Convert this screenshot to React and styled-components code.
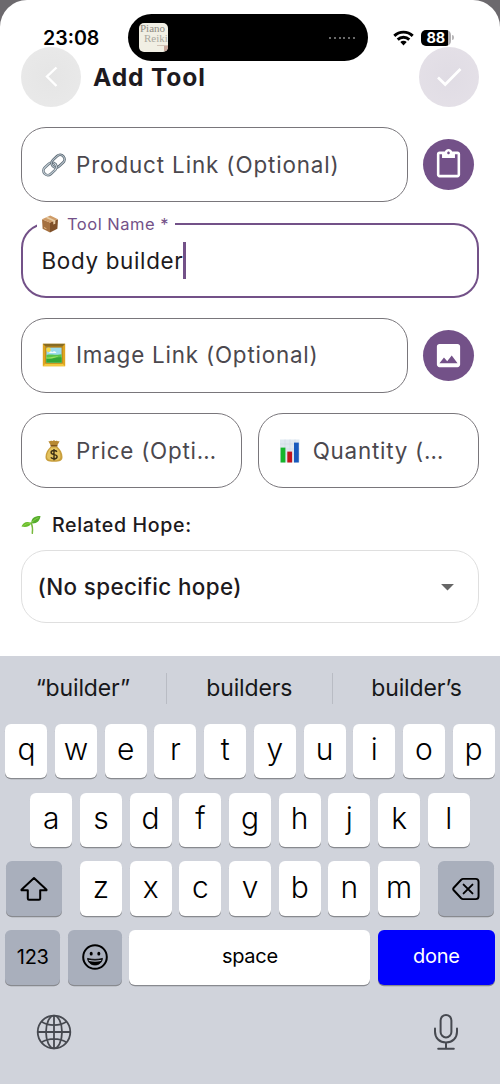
import React, {useState} from "react";
import styled, {createGlobalStyle} from "styled-components";
import {MdArrowDropDown, MdContentPaste, MdImage} from "react-icons/md";

const GlobalStyle = createGlobalStyle`
    * {
        box-sizing: border-box;
    }
    body {
        margin: 0;
        background-color: #6c696d;
        font-family: Inter, "Liberation Sans", sans-serif;
    }
    svg {
        display: block;
        flex: none;
    }
    button {
        font: inherit;
        border: 0;
        padding: 0;
    }
`;

const Screen = styled.div`
    display: flex;
    flex-direction: column;
    width: 500px;
    height: 1084px;
    overflow: hidden;
    background-color: #fff;
    border-radius: 27px 27px 0 0;
`;

const StatusBar = styled.div`
    display: grid;
    grid-template-columns: 127.5px 240.5px 1fr;
    height: 47px;
    padding-top: 14px;
`;

const Clock = styled.div`
    height: 47px;
    padding-left: 43px;
    line-height: 48px;
    font-size: 19.6px;
    font-weight: 600;
    color: #000;
    white-space: nowrap;
`;

const Island = styled.div`
    display: flex;
    align-items: center;
    justify-content: space-between;
    height: 47px;
    padding: 0 13px 0 11.5px;
    background-color: #000;
    border-radius: 24px;
`;

const Artwork = styled.div`
    display: flex;
    flex-direction: column;
    width: 29px;
    height: 29px;
    padding-left: 1px;
    overflow: hidden;
    border-radius: 5px;
    background-color: #f1efe4;
    color: #8d8b82;
    font-family: "Liberation Serif", serif;
    font-size: 11px;
    line-height: 10px;
    white-space: nowrap;
`;

const ArtworkSecond = styled.div`
    padding-left: 4px;
    color: #aaa89e;
`;

const ArtworkPiano = styled.div`
    align-self: flex-end;
    width: 11px;
    height: 6px;
    margin-top: 2px;
    border-top: 1px solid #d2c3b6;
    background: linear-gradient(90deg, transparent 7px, #c9a79b 7px);
`;

const Dots = styled.div`
    display: flex;
    gap: 2.8px;
`;

const Dot = styled.span`
    width: 2px;
    height: 2px;
    border-radius: 1px;
    background-color: #8c8c8c;
`;

const StatusIcons = styled.div`
    position: relative;
    z-index: 1;
    display: flex;
    align-items: center;
    height: 47px;
    padding-left: 25px;
    gap: 7px;
`;

const Battery = styled.div`
    display: flex;
    align-items: center;
    gap: 1px;
`;

const BatteryLevel = styled.div`
    width: 30px;
    height: 16px;
    border-radius: 5px;
    background: linear-gradient(90deg, #000 26.5px, #b0aeb0 26.5px);
    color: #fff;
    font-size: 14.5px;
    line-height: 16.5px;
    font-weight: 700;
    padding-left: 5.5px;
    letter-spacing: -0.2px;
`;

const BatteryCap = styled.span`
    width: 2px;
    height: 5px;
    border-radius: 0 2px 2px 0;
    background-color: #b8b6b8;
`;

const Header = styled.header`
    display: flex;
    align-items: center;
    height: 60px;
    padding: 0 21px;
`;

const RoundButton = styled.button`
    display: flex;
    align-items: center;
    justify-content: center;
    width: 60px;
    height: 60px;
    border-radius: 50%;
    background: ${props => props.$tint};
`;

const Title = styled.h1`
    flex: 1;
    margin: 0 0 1px 12px;
    font-size: 24.6px;
    line-height: 30px;
    font-weight: 650;
    letter-spacing: 0.85px;
    color: #1d1a20;
`;

const Form = styled.main`
    display: flex;
    flex-direction: column;
    padding: 20.4px 21px 0;
    height: 549.4px;
`;

const Line = styled.div`
    display: flex;
    align-items: center;
    gap: 15.5px;
    height: 75px;
    margin-bottom: 20.3px;
`;

const Field = styled.label`
    position: relative;
    flex: 1;
    min-width: 0;
    display: flex;
    align-items: center;
    height: 75px;
    padding: 0 ${props => props.$active ? 18.5 : 19.5}px;
    border: ${props => props.$active ? "2.5px solid #735188" : "1.3px solid #79767b"};
    border-radius: 25px;
`;

const Placeholder = styled.span`
    margin-left: 10.5px;
    font-size: 22.4px;
    line-height: 30px;
    letter-spacing: ${props => props.$spacing || 0.75}px;
    color: #4b484e;
    white-space: nowrap;
`;

// sits over the top border and hides it behind the text
const FloatingLabel = styled.span`
    position: absolute;
    left: 14px;
    top: -12px;
    display: flex;
    align-items: center;
    gap: 8px;
    width: 138px;
    height: 22px;
    padding-left: 4px;
    background-color: #fff;
    font-size: 16.5px;
    letter-spacing: 0.5px;
    color: #735188;
    white-space: nowrap;
`;

const Value = styled.span`
    margin-top: 2px;
    font-size: 22.4px;
    line-height: 30px;
    letter-spacing: 0.68px;
    color: #1d1a20;
`;

const Caret = styled.span`
    width: 2.5px;
    height: 37px;
    background-color: #735188;
`;

const ActionButton = styled.button`
    display: flex;
    align-items: center;
    justify-content: center;
    width: 51px;
    height: 51px;
    margin-right: 5px;
    border-radius: 50%;
    background-color: #735188;
    color: #fff;
`;

const SectionTitle = styled.h2`
    display: flex;
    align-items: center;
    gap: 11px;
    height: 26px;
    margin: 3px 0 12px;
    font-size: 19.6px;
    font-weight: 500;
    letter-spacing: 0.65px;
    color: #1d1a20;
`;

const Select = styled.div`
    display: flex;
    align-items: center;
    justify-content: space-between;
    height: 73.5px;
    padding: 0 15px 0 15.5px;
    border: 1.3px solid #dfdfdf;
    border-radius: 25px;
    font-size: 22.4px;
    font-weight: 500;
    letter-spacing: 0.38px;
    color: #1d1a20;
`;

const Keyboard = styled.section`
    flex: 1;
    background-color: #d0d3db;
`;

const Suggestions = styled.div`
    display: grid;
    grid-template-columns: 165.5px 166.5px 1fr;
    height: 67.6px;
    padding-top: 17px;
`;

const Suggestion = styled.div`
    height: 31px;
    line-height: 31px;
    text-align: center;
    font-size: 23px;
    letter-spacing: -0.15px;
    color: #17181a;
    border-left: ${props => props.$first ? "0" : "1px solid #b9bcc4"};
`;

const KeyRow = styled.div`
    display: flex;
    justify-content: center;
    gap: 7.7px;
    height: 54.5px;
    margin-bottom: 14.2px;
    padding: 0 5.3px;
`;

const Key = styled.button`
    display: flex;
    align-items: center;
    justify-content: center;
    flex: none;
    width: ${props => props.$width || 42}px;
    height: 54.5px;
    padding-bottom: ${props => props.$lift || 0}px;
    margin-left: ${props => props.$before || 0}px;
    margin-right: ${props => props.$behind || 0}px;
    border-radius: 6px;
    background-color: ${props => props.$tone || "#fff"};
    box-shadow: 0 1.2px 0 #888a8f;
    color: ${props => props.$ink || "#000"};
    font-size: ${props => props.$size || 30}px;
    font-weight: ${props => props.$size ? 400 : 320};
    letter-spacing: ${props => props.$size ? -0.3 : 0}px;
`;

const KeyboardFooter = styled.div`
    display: flex;
    align-items: center;
    justify-content: space-between;
    height: 42px;
    margin-top: 26px;
    padding: 0 41.5px 0 36px;
`;

const LinkEmoji = () => (
    <svg width="24" height="24" viewBox="0 0 24 24" fill="none">
        <g transform="rotate(-43 12 12)">
            <rect x="-0.8" y="7.6" width="14.4" height="8.8" rx="4.4" stroke="#65727d" strokeWidth="2.6" />
            <rect x="-0.8" y="7.6" width="14.4" height="8.8" rx="4.4" stroke="#c5d0d7" strokeWidth="1.1" />
            <rect x="10.4" y="7.6" width="14.4" height="8.8" rx="4.4" stroke="#596570" strokeWidth="2.6" />
            <rect x="10.4" y="7.6" width="14.4" height="8.8" rx="4.4" stroke="#b7c4cc" strokeWidth="1.1" />
            <path d="M9 16.4c2.7 0 4.6-2 4.6-4.4" stroke="#65727d" strokeWidth="2.6" />
            <path d="M9 16.4c2.7 0 4.6-2 4.6-4.4" stroke="#dce4e8" strokeWidth="1.1" />
        </g>
    </svg>
);

const BoxEmoji = () => (
    <svg width="18" height="18" viewBox="0 0 18 18">
        <path d="M1 4.2 9 7.6v10L1.6 13.8z" fill="#a5703f" />
        <path d="m9 7.6 8-3.4-.6 9.6L9 17.6z" fill="#7f5029" />
        <path d="m1 4.2 8.3-3.6L17 4.2 9 7.8z" fill="#cf9c68" />
        <path d="m4.6 2.7 7.7 3.6v3.3l2-.9V5.4L6.5 1.8z" fill="#e7cda6" />
        <path d="m3 12 2.4 1.2v1L3 13z" fill="#e2bd8c" />
    </svg>
);

const FrameEmoji = () => (
    <svg width="24" height="24" viewBox="0 0 24 24">
        <path d="M.8.8h22.4v22.4H.8z" fill="#dfa520" />
        <path d="M.8.8h22.4l-3 3H3.8z" fill="#876c24" />
        <path d="M.8 23.2h22.4l-3-3H3.8z" fill="#f3c83d" />
        <path d="M3.4 3.4h17.2v17.2H3.4z" fill="#b47c14" />
        <path d="M4.4 4.6h15.2v15H4.4z" fill="#9bdcec" />
        <circle cx="6.6" cy="6.8" r="2.2" fill="#f8dc42" />
        <path d="M7 10c1-2 3-1.6 3.4-.8.8-1.6 3.4-1.4 4 .8z" fill="#f5fbfb" />
        <path d="M4.4 12c4-1 7 .4 15.2-.8v8.4H4.4z" fill="#58c34b" />
        <path d="M4.4 15.4c6 1.4 9-1.8 15.2-1v5.2H4.4z" fill="#34a636" />
        <path d="M4.4 14.4c5 .6 8-1.4 12-1-4 1-7 2.6-12 2z" fill="#9be15b" />
    </svg>
);

const MoneyEmoji = () => (
    <svg width="24" height="24" viewBox="0 0 24 24">
        <path d="M6.4 2.2c1.6.4 2 0 2.8-.7.9.9 1.7.8 2.8-.4 1 1.2 1.8 1.2 2.8.4.8.8 1.4 1 2.8.8L14.8 7.2H9.2z" fill="#b88932" />
        <path d="M9 7.2h6c3.4 3 5.6 7 5.5 10.8 0 3.6-2.2 4.7-8.5 4.7S3.5 21.6 3.5 18C3.4 14.2 5.6 10.2 9 7.2z" fill="#c99f3d" />
        <path d="M9.2 8.5h5c3 3 4.4 6.2 4.2 9.2-.2 2.8-2 3.6-6.6 3.6S5 20.4 5 17.6c0-3 1.5-6.2 4.2-9.1z" fill="#e4c35f" />
        <path d="M8.6 6.7h6.8" stroke="#7e541a" strokeWidth="1.5" />
        <path d="M15 12.7c-.7-.8-1.7-1.2-3-1.2-1.7 0-2.9.8-2.9 2 0 3 6 1.2 6 4.2 0 1.3-1.3 2.1-3.1 2.1-1.4 0-2.5-.5-3.2-1.4M12 10v11.2" fill="none" stroke="#3c3015" strokeWidth="1.4" />
    </svg>
);

const ChartEmoji = () => (
    <svg width="24" height="24" viewBox="0 0 24 24">
        <path d="M2 .5h19.5v23H2z" fill="#dfe8f0" />
        <path d="M2 5h19.5M2 10h19.5M2 15h19.5M7 .5v23M12 .5v23M17 .5v23" stroke="#c8d5e1" strokeWidth=".5" />
        <path d="M2.6 8.6h4.8v14.9H2.6z" fill="#16b52b" />
        <path d="M9.3 12.6h4.8v10.9H9.3z" fill="#c3141d" />
        <path d="M16 3.6h4.8v19.9H16z" fill="#1859bd" />
    </svg>
);

const SeedlingEmoji = () => (
    <svg width="20" height="20" viewBox="0 0 20 20">
        <path d="M11.3 18.3c.6-4.6.2-7.6-1.2-10.5" fill="none" stroke="#77b93c" strokeWidth="1.5" strokeLinecap="round" />
        <path d="M10.3 8.3C10 3.2 14 .8 19.5 1c-.5 5-4 8-9.2 7.3z" fill="#55ad2d" />
        <path d="M10.2 8.2C6.5 5.6 2 7 .5 11.5c4.2 1.2 8.5.2 9.7-3.3z" fill="#69bd2d" />
        <path d="M10.6 7.8c2-2.8 4.5-4.2 7-5.2M9.6 8.3c-3-.1-5.2 1-7.2 2.5" fill="none" stroke="#96d64f" strokeWidth=".8" />
    </svg>
);

const Wifi = () => (
    <svg width="21" height="16" viewBox="0 0 21 16" fill="none" stroke="#000" strokeWidth="2.9">
        <path d="M1.3 5.9C6.5.9 14.5.9 19.7 5.9" />
        <path d="M4.7 9.6c3.3-3.1 8.3-3.1 11.6 0" />
        <path d="m7.3 12 3.2 3.4 3.2-3.4c-1.8-1.6-4.6-1.6-6.4 0z" fill="#000" stroke="none" />
    </svg>
);

const ShiftIcon = () => (
    <svg width="28" height="26" viewBox="0 0 28 26" fill="none" stroke="#000" strokeWidth="2" strokeLinejoin="round">
        <path d="M14 2 1.7 13.4c-.5.5-.3.9.3.9h5.8v8.2c0 .8.4 1.2 1.2 1.2h10c.8 0 1.2-.4 1.2-1.2v-8.2H26c.6 0 .8-.4.3-.9z" />
    </svg>
);

const BackspaceIcon = () => (
    <svg width="28" height="24" viewBox="0 0 29 24" fill="none" stroke="#000" strokeWidth="2" strokeLinecap="round" strokeLinejoin="round">
        <path d="M11.5 1.5h13c2 0 3 1 3 3v15c0 2-1 3-3 3h-13c-.8 0-1.4-.3-2-.9l-7.7-8.3c-.7-.8-.7-1.8 0-2.6l7.7-8.3c.6-.6 1.2-.9 2-.9z" />
        <path d="m12 7.4 9.2 9.2m0-9.2L12 16.6" />
    </svg>
);

const SmileIcon = () => (
    <svg width="26" height="26" viewBox="0 0 26 26">
        <circle cx="13" cy="13" r="11.8" fill="none" stroke="#000" strokeWidth="2" />
        <ellipse cx="9.2" cy="9.7" rx="1.5" ry="1.9" fill="#000" />
        <ellipse cx="16.8" cy="9.7" rx="1.5" ry="1.9" fill="#000" />
        <path d="M5.5 14.4c4.8 1.3 10.2 1.3 15 0-.5 4-3.5 6.6-7.5 6.6s-7-2.6-7.5-6.6z" fill="#000" stroke="#000" strokeWidth=".8" strokeLinejoin="round" />
        <path d="M6.5 15.7c4.2 1 8.8 1 13 0l-.5 1.4c-3.8.9-8.2.9-12 0z" fill="#a9afbc" />
    </svg>
);

const GlobeIcon = () => (
    <svg width="36" height="36" viewBox="0 0 36 36" fill="none" stroke="#464950" strokeWidth="1.8">
        <circle cx="18" cy="18" r="16.3" />
        <ellipse cx="18" cy="18" rx="8" ry="16.3" />
        <path d="M18 1.7v32.6M1.7 18h32.6M5.6 7.800c7.400 4.500 17.400 4.500 24.800 0M5.600 28.200c7.400-4.500 17.400-4.500 24.800 0" />
    </svg>
);

const MicIcon = () => (
    <svg width="26" height="38" viewBox="0 0 26 38" fill="none" stroke="#464950" strokeWidth="2" strokeLinecap="round">
        <rect x="7.6" y="2" width="10.8" height="22.4" rx="5.4" />
        <path d="M2 15.500v3.300c0 6.300 4.600 10.600 11 10.600s11-4.300 11-10.600v-3.300M13 29.400v6.300M5.200 35.800h15.600" />
    </svg>
);

const LETTERS = ["qwertyuiop", "asdfghjkl", "zxcvbnm"];
const GREY = "#a9afbc";

export default function App(){

    const [name, setName] = useState("Body builder");

    const press = char => setName(name + char);
    const erase = () => setName(name.slice(0, -1));
    const complete = word => setName(name.replace(/\S*$/, word));

    const letterKeys = row => row.split("").map(char =>
        <Key type="button" key={char} $lift={4} onClick={() => press(char)}>{char}</Key>
    );

    return(
        <Screen>
            <GlobalStyle />
            <StatusBar>
                <Clock>23:08</Clock>
                <Island>
                    <Artwork>
                        <div>Piano</div>
                        <ArtworkSecond>Reiki</ArtworkSecond>
                        <ArtworkPiano />
                    </Artwork>
                    <Dots>
                        {[0, 1, 2, 3, 4, 5].map(item => <Dot key={item} />)}
                    </Dots>
                </Island>
                <StatusIcons>
                    <Wifi />
                    <Battery>
                        <BatteryLevel>88</BatteryLevel>
                        <BatteryCap />
                    </Battery>
                </StatusIcons>
            </StatusBar>
            <Header>
                <RoundButton type="button" $tint="radial-gradient(#e5e5e5, #eaeaea)">
                    <svg width="14" height="22" viewBox="0 0 14 22" fill="none" stroke="#fff" strokeWidth="2.4">
                        <path d="M12.5 1.5 3 10.5l9.5 9.5" />
                    </svg>
                </RoundButton>
                <Title>Add Tool</Title>
                <RoundButton type="button" $tint="radial-gradient(#e0dce4, #e5e1e8)">
                    <svg width="26" height="20" viewBox="0 0 26 20" fill="none" stroke="#fff" strokeWidth="2.7">
                        <path d="m2 10.5 7.2 7L24.5 2" />
                    </svg>
                </RoundButton>
            </Header>
            <Form>
                <Line>
                    <Field>
                        <LinkEmoji />
                        <Placeholder $spacing={0.87}>Product Link (Optional)</Placeholder>
                    </Field>
                    <ActionButton type="button"><MdContentPaste size={31} /></ActionButton>
                </Line>
                <Line>
                    <Field $active>
                        <FloatingLabel><BoxEmoji />Tool Name *</FloatingLabel>
                        <Value>{name}</Value>
                        <Caret />
                    </Field>
                </Line>
                <Line>
                    <Field>
                        <FrameEmoji />
                        <Placeholder $spacing={0.8}>Image Link (Optional)</Placeholder>
                    </Field>
                    <ActionButton type="button"><MdImage size={31} /></ActionButton>
                </Line>
                <Line>
                    <Field>
                        <MoneyEmoji />
                        <Placeholder>Price (Opti…</Placeholder>
                    </Field>
                    <Field>
                        <ChartEmoji />
                        <Placeholder>Quantity (…</Placeholder>
                    </Field>
                </Line>
                <SectionTitle><SeedlingEmoji />Related Hope:</SectionTitle>
                <Select>
                    (No specific hope)
                    <MdArrowDropDown size={31} color="#666" />
                </Select>
            </Form>
            <Keyboard>
                <Suggestions>
                    <Suggestion $first onClick={() => complete("builder")}>“builder”</Suggestion>
                    <Suggestion onClick={() => complete("builders")}>builders</Suggestion>
                    <Suggestion onClick={() => complete("builder’s")}>builder’s</Suggestion>
                </Suggestions>
                <KeyRow>{letterKeys(LETTERS[0])}</KeyRow>
                <KeyRow>{letterKeys(LETTERS[1])}</KeyRow>
                <KeyRow>
                    <Key type="button" $width={56.5} $behind={10} $tone={GREY}><ShiftIcon /></Key>
                    {letterKeys(LETTERS[2])}
                    <Key type="button" $width={56.5} $before={10} $tone={GREY} onClick={erase}><BackspaceIcon /></Key>
                </KeyRow>
                <KeyRow>
                    <Key type="button" $width={54.5} $tone={GREY} $size={20}>123</Key>
                    <Key type="button" $width={54} $tone={GREY}><SmileIcon /></Key>
                    <Key type="button" $width={241} $size={20} $lift={3} onClick={() => press(" ")}>space</Key>
                    <Key type="button" $width={116.5} $size={20} $lift={3} $tone="#0000fe" $ink="#fff">done</Key>
                </KeyRow>
                <KeyboardFooter>
                    <GlobeIcon />
                    <MicIcon />
                </KeyboardFooter>
            </Keyboard>
        </Screen>
    );
}
